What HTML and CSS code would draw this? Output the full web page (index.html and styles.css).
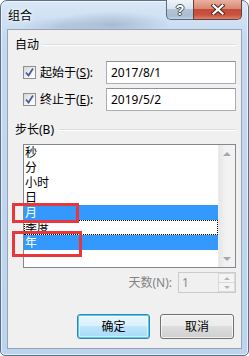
FILE: index.html
```html
<!DOCTYPE html>
<html lang="zh-CN">
<head>
  <meta charset="UTF-8">
  <title>组合</title>
  <link rel="stylesheet" href="styles.css">
</head>
<body>
  <div class="window">
    <div class="titlebar">
      <span class="title">组合</span>
      <div class="caption-btns">
        <div class="cap help"><span>?</span></div>
        <div class="cap close">
          <svg width="14" height="11" viewBox="0 0 14 11">
            <path d="M2.5 1.5 L11.5 9.5 M11.5 1.5 L2.5 9.5" stroke="#4a2a26" stroke-width="4.2" stroke-linecap="square"/>
            <path d="M2.5 1.5 L11.5 9.5 M11.5 1.5 L2.5 9.5" stroke="#fff" stroke-width="2.2" stroke-linecap="square"/>
          </svg>
        </div>
      </div>
    </div>

    <div class="client">
      <div class="group-head">
        <span>自动</span>
        <i class="rule"></i>
      </div>

      <div class="field-row">
        <span class="checkbox">
          <svg width="11" height="11" viewBox="0 0 11 11"><path d="M2 5.5 L4.5 8.5 L9 1.5" fill="none" stroke="#42599a" stroke-width="1.7"/></svg>
        </span>
        <span class="field-label">起始于(<u>S</u>):</span>
        <div class="textbox">2017/8/1</div>
      </div>

      <div class="field-row">
        <span class="checkbox">
          <svg width="11" height="11" viewBox="0 0 11 11"><path d="M2 5.5 L4.5 8.5 L9 1.5" fill="none" stroke="#42599a" stroke-width="1.7"/></svg>
        </span>
        <span class="field-label">终止于(<u>E</u>):</span>
        <div class="textbox">2019/5/2</div>
      </div>

      <div class="group-head step-head">
        <span>步长(B)</span>
        <i class="rule"></i>
      </div>

      <div class="listbox">
        <ul class="items">
          <li>秒</li>
          <li>分</li>
          <li>小时</li>
          <li>日</li>
          <li class="selected">月</li>
          <li class="focused">季度</li>
          <li class="selected">年</li>
        </ul>
        <div class="vscroll">
          <span class="arrow up"></span>
          <span class="arrow down"></span>
        </div>
      </div>

      <div class="days-row">
        <span class="days-label">天数(N):</span>
        <div class="spin">
          <span class="spin-value">1</span>
          <div class="spin-btns">
            <span class="spin-btn"><i class="arrow up"></i></span>
            <span class="spin-btn"><i class="arrow down"></i></span>
          </div>
        </div>
      </div>

      <div class="actions">
        <button class="btn default">确定</button>
        <button class="btn">取消</button>
      </div>
    </div>

    <!-- red annotation boxes drawn over the screenshot -->
    <div class="mark mark-month"></div>
    <div class="mark mark-year"></div>
  </div>
</body>
</html>
```

FILE: styles.css
```css
* {
  margin: 0;
  padding: 0;
  box-sizing: border-box;
}

body {
  width: 249px;
  height: 356px;
  font-family: "Noto Sans", "Noto Sans CJK SC", sans-serif;
  font-size: 12px;
  color: #000;
  background: #fff;
  overflow: hidden;
}

.window {
  position: relative;
  width: 249px;
  height: 356px;
  border: 1px solid #5b6f88;
  border-radius: 7px 7px 5px 5px;
  background:
    radial-gradient(ellipse 60px 14px at 110px 24px, rgba(120, 145, 170, 0.45), transparent),
    radial-gradient(ellipse 40px 10px at 60px 26px, rgba(140, 160, 185, 0.35), transparent),
    linear-gradient(#d9e7f6, #c4d9ef 40px, #bcd4ee);
  box-shadow: inset 0 0 0 1px rgba(255, 255, 255, 0.6);
  display: flex;
  flex-direction: column;
}

.titlebar {
  height: 28px;
  display: flex;
  align-items: flex-start;
}

.title {
  padding: 6px 0 0 7px;
  line-height: 17px;
  font-size: 12px;
  color: #000;
  text-shadow: 0 0 6px #fff, 0 0 3px #fff;
}

.caption-btns {
  margin-left: auto;
  margin-right: 6px;
  margin-top: -1px;
  display: flex;
}

.cap {
  height: 20px;
  display: flex;
  align-items: center;
  justify-content: center;
  border: 1px solid #5a6c84;
  border-top: none;
}

.help {
  width: 27px;
  border-right: none;
  border-radius: 0 0 0 5px;
  background: linear-gradient(#eef3f8, #dbe4ee 45%, #b3c4d6 50%, #a9bdd2 85%, #c3d4e6);
}

.help span {
  font-family: "Liberation Sans", sans-serif;
  font-weight: bold;
  font-size: 14px;
  line-height: 14px;
  color: #fff;
  text-shadow: -1px 0 #4a4f57, 1px 0 #4a4f57, 0 -1px #4a4f57, 0 1px #4a4f57;
}

.close {
  width: 49px;
  border-radius: 0 0 5px 0;
  border-color: #6a3e3a;
  background: linear-gradient(#eab0a2, #d98874 45%, #c44b37 50%, #c9543f 80%, #db8470);
}

.client {
  margin: 0 6px 6px 6px;
  height: 320px;
  border: 1px solid #97a5b6;
  background: #f0f0f0;
  padding: 8px 5px 9px 7px;
  display: flex;
  flex-direction: column;
}

.group-head {
  height: 14px;
  display: flex;
  align-items: center;
  gap: 4px;
  line-height: 14px;
}

.group-head .rule {
  flex: 1;
  height: 1px;
  background: #d5dfe5;
  border-bottom: 1px solid #fff;
  box-sizing: content-box;
}

.step-head {
  margin-top: 12px;
}

.field-row {
  display: flex;
  align-items: center;
  margin-top: 4px;
}

.group-head + .field-row {
  margin-top: 9px;
}

.checkbox {
  width: 13px;
  height: 13px;
  margin-left: 8px;
  border: 1px solid #8e8f8f;
  background: linear-gradient(135deg, #d5d5d5, #f4f4f4 60%, #fff);
  display: flex;
  align-items: center;
  justify-content: center;
}

.field-label {
  width: 66px;
  margin-left: 4px;
  line-height: 16px;
}

.textbox {
  width: 130px;
  height: 23px;
  border: 1px solid #abadb3;
  border-top-color: #8d9199;
  background: #fff;
  padding: 0 4px;
  line-height: 21px;
  font-size: 12px;
}

.listbox {
  margin: 7px 0 0 8px;
  height: 124px;
  border: 1px solid #828790;
  background: #fff;
  display: flex;
}

.items {
  list-style: none;
  flex: 1;
}

.items li {
  height: 15px;
  line-height: 15px;
  padding-left: 1px;
  overflow: hidden;
}

.items li.selected {
  background: #3399ff;
  color: #fff;
}

.items li.focused {
  outline: 1px dotted #000;
  outline-offset: -1px;
}

.vscroll {
  width: 17px;
  background: linear-gradient(90deg, #e6e6e6, #f2f2f2 40%, #f2f2f2);
  border-left: 1px solid #ececec;
  display: flex;
  flex-direction: column;
  justify-content: space-between;
  align-items: center;
  padding: 7px 0 6px;
}

.arrow {
  width: 0;
  height: 0;
  border-left: 4px solid transparent;
  border-right: 4px solid transparent;
}

.arrow.up {
  border-bottom: 4px solid #a7a7a7;
}

.arrow.down {
  border-top: 4px solid #a7a7a7;
}

.days-row {
  margin-top: 4px;
  display: flex;
  justify-content: flex-end;
  align-items: center;
  gap: 6px;
}

.days-label {
  color: #838383;
  line-height: 16px;
}

.spin {
  width: 58px;
  height: 21px;
  border: 1px solid #c9cbcf;
  background: #f0f0f0;
  display: flex;
}

.spin-value {
  flex: 1;
  padding-left: 3px;
  line-height: 19px;
  color: #8a8a8a;
}

.spin-btns {
  width: 17px;
  display: flex;
  flex-direction: column;
}

.spin-btn {
  flex: 1;
  border: 1px solid #d9d9d9;
  background: #f4f4f4;
  display: flex;
  align-items: center;
  justify-content: center;
}

.spin-btn + .spin-btn {
  border-top: none;
}

.spin-btn .arrow {
  border-left-width: 3px;
  border-right-width: 3px;
}

.spin-btn .arrow.up {
  border-bottom: 3px solid #b5b5b5;
}

.spin-btn .arrow.down {
  border-top: 3px solid #b5b5b5;
}

.actions {
  margin-top: 21px;
  padding-right: 2px;
  display: flex;
  justify-content: flex-end;
  gap: 10px;
}

.btn {
  width: 73px;
  height: 25px;
  border: 1px solid #707070;
  border-radius: 3px;
  background: linear-gradient(#f2f2f2, #ebebeb 50%, #dddddd 50%, #cfcfcf);
  box-shadow: inset 0 0 0 1px rgba(255, 255, 255, 0.7);
  font-family: inherit;
  font-size: 12px;
  color: #000;
  line-height: 21px;
}

.btn + .btn {
  width: 74px;
}

.btn.default {
  border-color: #3c7fb1;
  box-shadow: inset 0 0 0 1px #48d0f8, inset 0 0 0 2px rgba(255, 255, 255, 0.5);
  background: linear-gradient(#eaf6fd, #d9f0fc 50%, #bee6fd 50%, #a7d9f5);
}

.mark {
  position: absolute;
  border: 3px solid #e8373c;
}

.mark-month {
  left: 11px;
  top: 202px;
  width: 67px;
  height: 20px;
}

.mark-year {
  left: 11px;
  top: 230px;
  width: 70px;
  height: 26px;
}
```
